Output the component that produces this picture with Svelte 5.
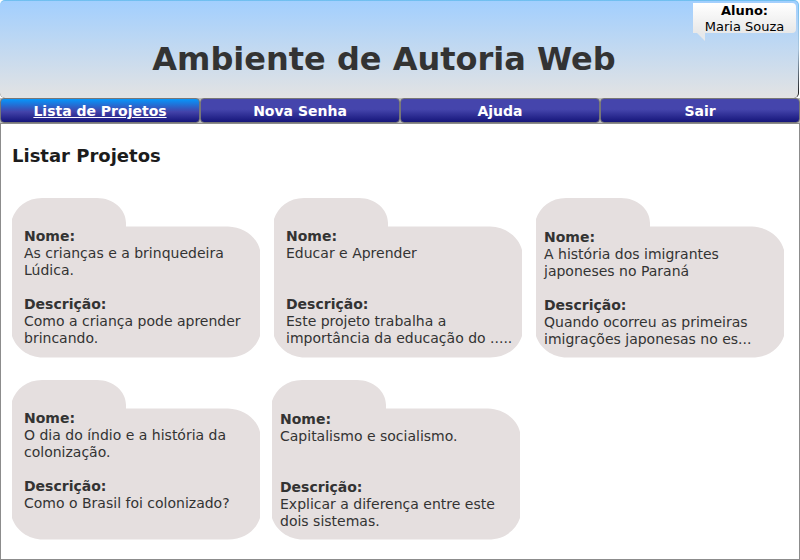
<script>
  const menu = ['Lista de Projetos', 'Nova Senha', 'Ajuda', 'Sair'];
  let current = $state(0);

  const rows = [
    [
      { name: 'As crianças e a brinquedeira Lúdica.', text: 'Como a criança pode aprender brincando.' },
      { name: 'Educar e Aprender', text: 'Este projeto trabalha a importância da educação do .....' },
      { name: 'A história dos imigrantes japoneses no Paraná', text: 'Quando ocorreu as primeiras imigrações japonesas no es...', near: true }
    ],
    [
      { name: 'O dia do índio e a história da colonização.', text: 'Como o Brasil foi colonizado?' },
      { name: 'Capitalismo e socialismo.', text: 'Explicar a diferença entre este dois sistemas.', near: true }
    ]
  ];
</script>

<div class="page">
  <header>
    <h1>Ambiente de Autoria Web</h1>
    <div class="user">
      <strong>Aluno:</strong>
      <span>Maria Souza</span>
      <svg class="tail" viewBox="0 0 8 8" aria-hidden="true"><path d="M0 0H8V8Z" fill="#e6e8ea" /></svg>
    </div>
  </header>

  <nav>
    {#each menu as item, i}
      <a href="#menu-{i}" class:active={current === i} onclick={() => (current = i)}>{item}</a>
    {/each}
  </nav>

  <main>
    <h2>Listar Projetos</h2>
    <div class="projects">
      {#each rows as row, r}
        <div class="row" class:tight={r > 0}>
          {#each row as project}
            <article class:near={project.near}>
              <svg class="folder" viewBox="0 0 248 160" preserveAspectRatio="none" aria-hidden="true">
                <path d="M0 21C4 9 15 0 30 0H85C101 0 114 11 114 25V28.500H216C232 29 245 39 248 52V138C244 150 233 159.500 216 159.500H31C16 159.500 4 150 0 138Z" fill="#e5dfdf" />
              </svg>
              <h3>Nome:</h3>
              <p class="name">{project.name}</p>
              <h3>Descrição:</h3>
              <p>{project.text}</p>
            </article>
          {/each}
        </div>
      {/each}
    </div>
  </main>
</div>

<style>
  :global(body) {
    margin: 0;
    background: #fff;
  }
  .page {
    min-height: 100vh;
    display: flex;
    flex-direction: column;
    font-family: Verdana, 'DejaVu Sans', sans-serif;
    font-size: 14px;
    line-height: 17px;
    color: #333;
  }
  * {
    box-sizing: border-box;
  }
  h1, h2, h3, p {
    margin: 0;
  }
  header {
    position: relative;
    height: 98px;
    margin-right: 1px;
    padding: 38px 30px 0 0;
    border: 0 solid transparent;
    border-width: 1px 1px 0 0;
    border-radius: 5px;
    background:
      linear-gradient(#a2cffe, #e3e3e3) padding-box,
      linear-gradient(#70bff0, #a9c4dc 50%, #111) border-box;
    text-align: center;
  }
  h1 {
    font-size: 32px;
    line-height: 40px;
  }
  .user {
    position: absolute;
    top: 2px;
    right: 2px;
    width: 103px;
    height: 30px;
    display: flex;
    flex-direction: column;
    align-items: center;
    border-radius: 0 4px 4px 0;
    background: linear-gradient(#fff, #e8e8e8);
    font-size: 13px;
    line-height: 16px;
    color: #000;
  }
  .tail {
    position: absolute;
    left: 4px;
    top: 100%;
    width: 8px;
    height: 8px;
  }
  nav {
    display: flex;
    background: #bbb;
  }
  nav a {
    flex: 1;
    height: 25px;
    border: 1px solid #777;
    border-radius: 4px;
    background: linear-gradient(#4545ac 45%, #15157a);
    color: #fff;
    font-weight: bold;
    line-height: 24px;
    text-align: center;
    text-decoration: none;
  }
  nav a.active {
    background: linear-gradient(#0696fb, #4343aa 55%, #15157a);
    text-decoration: underline;
  }
  main {
    flex: 1;
    padding: 20px 10px 19px 11px;
    border: 1px solid #8c8c8c;
  }
  h2 {
    font-size: 18px;
    line-height: 24px;
    color: #1c1c1c;
  }
  .projects {
    display: flex;
    flex-direction: column;
    gap: 22px;
    padding-top: 30px;
  }
  .row {
    display: flex;
    flex-wrap: wrap;
    gap: 14px;
  }
  .row.tight {
    gap: 12px;
  }
  article {
    position: relative;
    isolation: isolate;
    width: 248px;
    min-height: 160px;
    padding: 30px 8px 10px 12px;
  }
  article.near {
    padding: 31px 8px 9px 8px;
  }
  .folder {
    position: absolute;
    inset: 0;
    z-index: -1;
    width: 100%;
    height: 100%;
  }
  h3 {
    font-size: 14px;
    line-height: 17px;
  }
  .name {
    min-height: 34px;
    margin-bottom: 17px;
  }
</style>
